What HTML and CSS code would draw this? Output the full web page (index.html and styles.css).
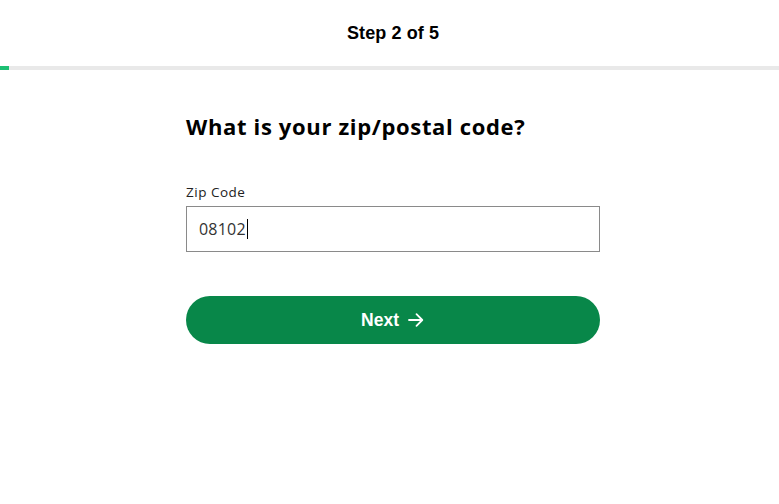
FILE: index.html
```html
<!DOCTYPE html>
<html lang="en">
<head>
<meta charset="utf-8">
<title>Step 2 of 5</title>
<link rel="stylesheet" href="styles.css">
</head>
<body>
<div class="page">
  <header class="topbar">
    <div class="step">Step 2 of 5</div>
  </header>
  <div class="progress"><div class="progress-fill"></div></div>
  <main class="content">
    <h1 class="title">What is your zip/postal code?</h1>
    <label class="label" for="zip">Zip Code</label>
    <div class="input"><span class="value">08102</span><span class="caret"></span></div>
    <button class="next" type="button">Next
      <svg class="arrow" width="18" height="18" viewBox="0 0 18 18" fill="none" stroke="#fff" stroke-width="1.8" stroke-linecap="round" stroke-linejoin="round"><path d="M2 9h13M9.5 3.2 15.3 9l-5.8 5.8"/></svg>
    </button>
  </main>
</div>
</body>
</html>
```
FILE: styles.css
```css
html, body { margin: 0; padding: 0; background: #fff; }
body { font-family: "Open Sans", "Liberation Sans", sans-serif; color: #000; }
.page { width: 100%; }
.topbar { height: 66px; display: flex; align-items: center; justify-content: center; padding-left: 7px; box-sizing: border-box; }
.step { font-family: "Liberation Sans", Arial, sans-serif; font-weight: 700; font-size: 18px; letter-spacing: 0.1px; color: #000; }
.progress { height: 4px; background: #e9e9e9; }
.progress-fill { width: 9px; height: 100%; background: #1dbf73; }
.content { width: 414px; margin: 0 auto; padding: 40px 0 0 7px; display: flex; flex-direction: column; }
.title { margin: 0; font-family: "Open Sans", sans-serif; font-weight: 700; font-size: 22px; letter-spacing: 0.65px; line-height: 32px; color: #000; }
.label { margin-top: 41px; font-size: 13.5px; letter-spacing: 0.5px; line-height: 18px; color: #222; font-weight: 500; }
.input { margin-top: 5px; height: 46px; box-sizing: border-box; border: 1px solid #8a8a8a; display: flex; align-items: center; padding-left: 12px; }
.value { font-size: 16px; color: #333; letter-spacing: 0.2px; }
.caret { width: 1px; height: 20px; background: #000; margin-left: 1px; }
.next { margin-top: 44px; height: 48px; border: 0; border-radius: 24px; background: #088749; color: #fff; font-family: "Liberation Sans", Arial, sans-serif; font-weight: 700; font-size: 17.5px; display: flex; align-items: center; justify-content: center; gap: 8px; padding: 0; cursor: pointer; }
.arrow { display: block; }
```
